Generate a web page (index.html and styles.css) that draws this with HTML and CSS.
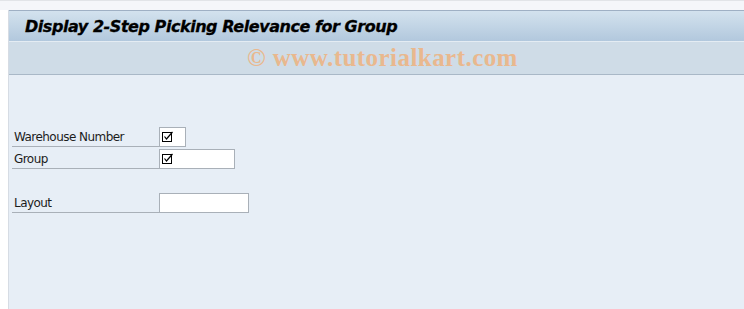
FILE: index.html
```html
<!DOCTYPE html>
<html lang="en">

<head>
  <meta charset="UTF-8">
  <title>Display 2-Step Picking Relevance for Group</title>
  <link rel="stylesheet" href="styles.css">
</head>

<body>
  <div class="top-strip"></div>
  <div class="screen">
    <div class="title-bar">
      <h1>Display 2-Step Picking Relevance for Group</h1>
    </div>
    <div class="toolbar">
      <span class="watermark">&copy; www.tutorialkart.com</span>
    </div>

    <div class="form">
      <div class="row">
        <label class="label">Warehouse Number</label>
        <div class="field small">
          <svg class="check" width="12" height="12" viewBox="0 0 12 12">
            <rect x="0.5" y="1.5" width="9" height="9" fill="none" stroke="#000" />
            <path d="M2.5 5.5 L4.5 8 L10.5 1" fill="none" stroke="#000" stroke-width="1.2" />
          </svg>
        </div>
      </div>
      <div class="row">
        <label class="label">Group</label>
        <div class="field medium">
          <svg class="check" width="12" height="12" viewBox="0 0 12 12">
            <rect x="0.5" y="1.5" width="9" height="9" fill="none" stroke="#000" />
            <path d="M2.5 5.5 L4.5 8 L10.5 1" fill="none" stroke="#000" stroke-width="1.2" />
          </svg>
        </div>
      </div>
      <div class="row spacer"></div>
      <div class="row">
        <label class="label">Layout</label>
        <div class="field wide"></div>
      </div>
    </div>
  </div>
</body>

</html>
```

FILE: styles.css
```css
* {
  box-sizing: border-box;
  margin: 0;
  padding: 0;
}

html,
body {
  height: 100%;
}

body {
  background: #ffffff;
  font-family: 'DejaVu Sans', Verdana, sans-serif;
  display: flex;
  flex-direction: column;
  overflow: hidden;
}

.top-strip {
  height: 10px;
  background: #f5f6fa;
  border-top: 1px solid #e2e4e8;
}

.screen {
  flex: 1;
  margin-left: 8px;
  border-left: 1px solid #d6dce4;
  background: #e7eef6;
}

.title-bar {
  height: 31px;
  border-top: 1px solid #9fb0c4;
  background: linear-gradient(#d3e2ee, #b2c8dd);
  padding-left: 16px;
  display: flex;
  align-items: center;
}

.title-bar h1 {
  font-size: 16px;
  font-weight: bold;
  font-style: italic;
  color: #000;
  letter-spacing: -0.45px;
  -webkit-text-stroke: 0.3px #000;
}

.toolbar {
  height: 34px;
  border-top: 1px solid #e4ecf3;
  border-bottom: 1px solid #a9b8c7;
  background: #cfdce7;
  padding-left: 238px;
  display: flex;
  align-items: center;
}

.watermark {
  font-family: 'Liberation Serif', serif;
  font-weight: bold;
  font-size: 25px;
  color: #e9b88e;
  letter-spacing: 0.45px;
}

.form {
  padding: 50px 0 0 3px;
}

.row {
  display: flex;
  align-items: flex-end;
  height: 22px;
}

.label {
  width: 147px;
  height: 20px;
  padding: 3px 0 0 2px;
  font-size: 12px;
  color: #1c1c1c;
  border-bottom: 1px solid #a9b0b8;
  letter-spacing: -0.55px;
}

.field {
  height: 20px;
  background: #fff;
  border: 1px solid #a9b0b8;
  padding-left: 2px;
  display: flex;
  align-items: center;
}

.field.small {
  width: 27px;
}

.field.medium {
  width: 76px;
}

.field.wide {
  width: 90px;
}

.check {
  display: block;
}
```
